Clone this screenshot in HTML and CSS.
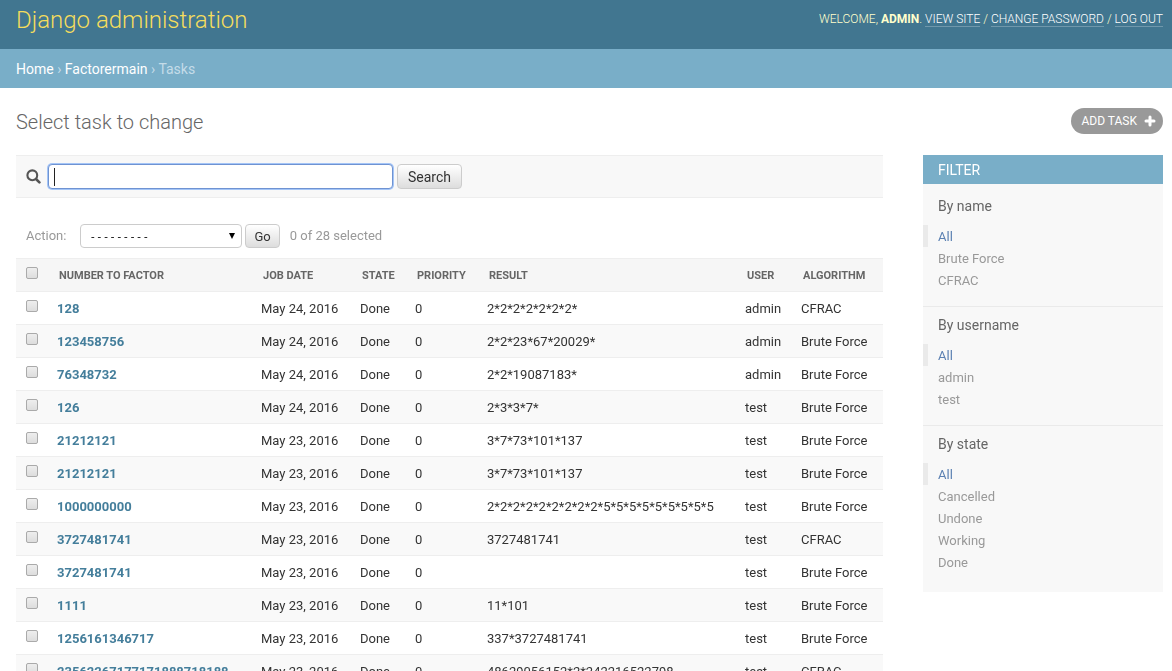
FILE: index.html
```html
<!DOCTYPE html>
<html lang="en">
<head>
<meta charset="utf-8">
<title>Select task to change | Django site admin</title>
<link rel="stylesheet" href="styles.css">
</head>
<body>
<header class="header">
  <h1 class="site-name"><a href="#">Django administration</a></h1>
  <div class="user-tools">Welcome, <strong>admin</strong>. <a href="#">View site</a> / <a href="#">Change password</a> / <a href="#">Log out</a></div>
</header>
<nav class="breadcrumbs"><a href="#">Home</a> › <a href="#">Factorermain</a> › Tasks</nav>
<main class="content">
  <div class="title-row">
    <h2 class="title">Select task to change</h2>
    <a class="add-link" href="#">Add task
      <svg width="12" height="12" viewBox="0 0 12 12" aria-hidden="true"><path d="M6 2v8M2 6h8" stroke="#fff" stroke-width="3" stroke-linecap="round"/></svg>
    </a>
  </div>
  <div class="columns">
    <section class="changelist">
      <form class="search-bar">
        <label class="search-label" for="q" aria-label="Search tasks"><svg width="15" height="15" viewBox="0 0 15 15"><circle cx="6.3" cy="6.3" r="4.9" fill="none" stroke="#555" stroke-width="2.1"/><path d="M10 10l3.4 3.4" stroke="#555" stroke-width="2.6" stroke-linecap="round"/></svg></label>
        <input class="search-input" type="text" id="q" autofocus>
        <button class="button" type="button">Search</button>
      </form>
      <div class="actions">
        <label for="action">Action:</label>
        <span class="select-wrap"><select class="action-select" id="action"><option>---------</option></select><svg class="arrow" width="8" height="8" viewBox="0 0 8 8" aria-hidden="true"><path d="M1 1h6L4 7z" fill="#000"/></svg></span>
        <button class="button button-go" type="button">Go</button>
        <span class="counter">0 of 28 selected</span>
      </div>
      <table class="results">
        <colgroup><col class="c-check"><col class="c-number"><col class="c-date"><col class="c-state"><col class="c-priority"><col><col class="c-user"><col class="c-algorithm"></colgroup>
        <thead><tr><th class="check"><input type="checkbox" aria-label="Select all"></th><th>Number to factor</th><th>Job date</th><th>State</th><th>Priority</th><th>Result</th><th>User</th><th>Algorithm</th></tr></thead>
        <tbody>
          <tr><td class="check"><input type="checkbox" aria-label="Select 128"></td><td><a href="#">128</a></td><td>May 24, 2016</td><td>Done</td><td>0</td><td>2*2*2*2*2*2*2*</td><td>admin</td><td>CFRAC</td></tr>
          <tr><td class="check"><input type="checkbox" aria-label="Select 123458756"></td><td><a href="#">123458756</a></td><td>May 24, 2016</td><td>Done</td><td>0</td><td>2*2*23*67*20029*</td><td>admin</td><td>Brute Force</td></tr>
          <tr><td class="check"><input type="checkbox" aria-label="Select 76348732"></td><td><a href="#">76348732</a></td><td>May 24, 2016</td><td>Done</td><td>0</td><td>2*2*19087183*</td><td>admin</td><td>Brute Force</td></tr>
          <tr><td class="check"><input type="checkbox" aria-label="Select 126"></td><td><a href="#">126</a></td><td>May 24, 2016</td><td>Done</td><td>0</td><td>2*3*3*7*</td><td>test</td><td>Brute Force</td></tr>
          <tr><td class="check"><input type="checkbox" aria-label="Select 21212121"></td><td><a href="#">21212121</a></td><td>May 23, 2016</td><td>Done</td><td>0</td><td>3*7*73*101*137</td><td>test</td><td>Brute Force</td></tr>
          <tr><td class="check"><input type="checkbox" aria-label="Select 21212121"></td><td><a href="#">21212121</a></td><td>May 23, 2016</td><td>Done</td><td>0</td><td>3*7*73*101*137</td><td>test</td><td>Brute Force</td></tr>
          <tr><td class="check"><input type="checkbox" aria-label="Select 1000000000"></td><td><a href="#">1000000000</a></td><td>May 23, 2016</td><td>Done</td><td>0</td><td>2*2*2*2*2*2*2*2*2*5*5*5*5*5*5*5*5*5</td><td>test</td><td>Brute Force</td></tr>
          <tr><td class="check"><input type="checkbox" aria-label="Select 3727481741"></td><td><a href="#">3727481741</a></td><td>May 23, 2016</td><td>Done</td><td>0</td><td>3727481741</td><td>test</td><td>CFRAC</td></tr>
          <tr><td class="check"><input type="checkbox" aria-label="Select 3727481741"></td><td><a href="#">3727481741</a></td><td>May 23, 2016</td><td>Done</td><td>0</td><td></td><td>test</td><td>Brute Force</td></tr>
          <tr><td class="check"><input type="checkbox" aria-label="Select 1111"></td><td><a href="#">1111</a></td><td>May 23, 2016</td><td>Done</td><td>0</td><td>11*101</td><td>test</td><td>Brute Force</td></tr>
          <tr><td class="check"><input type="checkbox" aria-label="Select 1256161346717"></td><td><a href="#">1256161346717</a></td><td>May 23, 2016</td><td>Done</td><td>0</td><td>337*3727481741</td><td>test</td><td>Brute Force</td></tr>
          <tr><td class="check"><input type="checkbox" aria-label="Select 23562267177171888718188"></td><td><a href="#">23562267177171888718188</a></td><td>May 23, 2016</td><td>Done</td><td>0</td><td>48629056152*2*242216522798</td><td>test</td><td>CFRAC</td></tr>
        </tbody>
      </table>
    </section>
    <aside class="filter">
      <h2>Filter</h2>
      <h3>By name</h3>
      <ul><li class="selected"><a href="#">All</a></li><li><a href="#">Brute Force</a></li><li><a href="#">CFRAC</a></li></ul>
      <h3>By username</h3>
      <ul><li class="selected"><a href="#">All</a></li><li><a href="#">admin</a></li><li><a href="#">test</a></li></ul>
      <h3>By state</h3>
      <ul><li class="selected"><a href="#">All</a></li><li><a href="#">Cancelled</a></li><li><a href="#">Undone</a></li><li><a href="#">Working</a></li><li><a href="#">Done</a></li></ul>
    </aside>
  </div>
</main>
</body>
</html>
```
FILE: styles.css
```css
* { box-sizing: border-box; }
html { overflow: hidden; }
body {
  margin: 0;
  background: #fff;
  color: #333;
  font: 13px/16px Roboto, "Liberation Sans", sans-serif;
}
a { text-decoration: none; }
h1, h2, h3, ul { margin: 0; padding: 0; font-weight: 400; }

.header {
  display: flex;
  justify-content: space-between;
  align-items: flex-start;
  padding: 6px 9px 15px 16px;
  background: #417690;
  color: #ffc;
}
.site-name { font-size: 24px; line-height: 28px; font-weight: 300; }
.site-name a { color: #f5dd5d; }
.user-tools {
  padding-top: 5px;
  font-size: 12px;
  font-weight: 300;
  text-transform: uppercase;
}
.user-tools strong { font-weight: 700; }
.user-tools a { color: #fff; border-bottom: 1px solid rgba(255, 255, 255, .25); }

.breadcrumbs {
  padding: 11px 16px 9px;
  background: #79aec8;
  color: #c4dce8;
  font-size: 14px;
  line-height: 19px;
}
.breadcrumbs a { color: #fff; }

.content { padding: 20px 9px 0 16px; }
.title-row {
  display: flex;
  justify-content: space-between;
  align-items: flex-start;
  padding-bottom: 21px;
}
.title { padding-top: 2px; font-size: 20px; line-height: 24px; font-weight: 300; color: #666; }
.add-link {
  display: flex;
  align-items: center;
  gap: 7px;
  height: 26px;
  padding: 0 7px 0 11px;
  border-radius: 13px;
  background: #999;
  color: #fff;
  font-size: 12px;
  text-transform: uppercase;
}

.columns { display: flex; align-items: flex-start; gap: 40px; }
.changelist { flex: 1; min-width: 0; }
.search-bar {
  display: flex;
  align-items: center;
  height: 43px;
  padding: 0 10px;
  background: #f8f8f8;
  border-top: 1px solid #eee;
  border-bottom: 1px solid #eee;
}
.search-label { display: flex; width: 22px; }
.search-input {
  width: 345px;
  height: 25px;
  margin-right: 4px;
  padding: 2px 5px;
  border: 1px solid #6f93d2;
  border-radius: 4px;
  box-shadow: 0 0 0 1px #a4c5f7;
  outline: 0;
  caret-color: transparent;
  background: #fff;
  font: 14px Roboto, sans-serif;
}
.search-input:focus {
  background: linear-gradient(#222, #222) 5px 3px / 1px 18px no-repeat #fff;
}
.button {
  height: 25px;
  padding: 0 10px;
  border: 1px solid #ccc;
  border-radius: 4px;
  background: linear-gradient(#fff, #ddd);
  color: #333;
  font: 14px Roboto, sans-serif;
}
.button-go { height: 24px; padding: 0 8px; font-size: 13px; }

.actions {
  display: flex;
  align-items: center;
  margin: 26px 0 10px;
  padding: 0 10px;
  color: #999;
}
.select-wrap { position: relative; margin: 0 3px 0 14px; }
.action-select {
  display: block;
  appearance: none;
  width: 162px;
  height: 24px;
  padding: 0 8px;
  border: 1px solid #ccc;
  border-radius: 4px;
  background: #fff;
  color: #000;
  font: 11px "DejaVu Sans Mono", "Liberation Mono", monospace;
}
.arrow { position: absolute; right: 6px; top: 8px; pointer-events: none; }
.counter { margin-left: 10px; }

.results { width: 100%; table-layout: fixed; border-collapse: collapse; }
.c-check { width: 33px; }
.c-number { width: 204px; }
.c-date { width: 99px; }
.c-state { width: 55px; }
.c-priority { width: 72px; }
.c-user { width: 56px; }
.c-algorithm { width: 90px; }
.results th {
  height: 33px;
  padding: 2px 10px 0;
  border-top: 1px solid #eee;
  border-bottom: 1px solid #eee;
  background: #f6f6f6;
  color: #666;
  font-size: 11px;
  font-weight: 700;
  text-align: left;
  text-transform: uppercase;
  white-space: nowrap;
}
.results td {
  height: 33px;
  padding: 2px 8px 0;
  border-bottom: 1px solid #eee;
  white-space: nowrap;
}
.results tbody tr:nth-child(even) { background: #f9f9f9; }
.results .check { padding: 8px 10px; vertical-align: top; }
.results td a { color: #447e9b; font-weight: 700; }
.results input {
  display: block;
  appearance: none;
  width: 12px;
  height: 12px;
  margin: 0;
  border: 1px solid #aaa;
  border-radius: 2px;
  background: linear-gradient(#eee, #ddd);
}

.filter { width: 240px; padding-bottom: 4px; background: #f8f8f8; }
.filter h2 {
  padding: 6px 15px 4px;
  background: #79aec8;
  color: #fff;
  font-size: 14px;
  line-height: 19px;
  text-transform: uppercase;
}
.filter h3 { padding: 14px 15px 10px; font-size: 14px; line-height: 17px; color: #666; }
.filter ul { padding-bottom: 15px; border-bottom: 1px solid #eaeaea; list-style: none; }
.filter ul + h3 { padding-top: 10px; }
.filter ul:last-child { border-bottom: 0; }
.filter li { padding: 2px 0 0 10px; border-left: 5px solid transparent; line-height: 20px; }
.filter li a { color: #999; }
.filter .selected { border-left-color: #eaeaea; }
.filter .selected a { color: #5b80b2; }
```
